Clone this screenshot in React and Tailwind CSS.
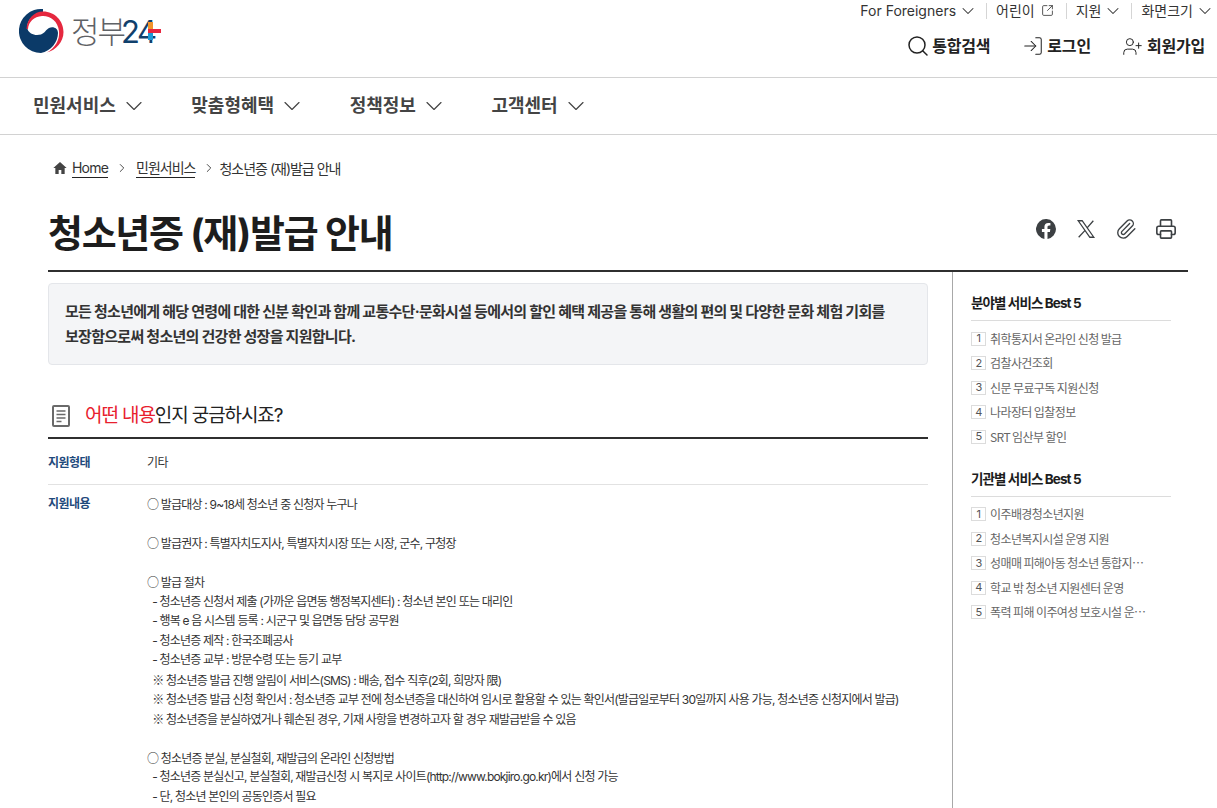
import { ChevronDown, ChevronRight, Search, LogIn, UserPlus, Paperclip, Printer, SquareArrowOutUpRight } from 'lucide-react';

const FONT = "font-['Inter','Noto_Sans_CJK_KR',sans-serif]";

const FIELD_BEST = ['취학통지서 온라인 신청 발급', '검찰사건조회', '신문 무료구독 지원신청', '나라장터 입찰정보', 'SRT 임산부 할인'];
const ORG_BEST = ['이주배경청소년지원', '청소년복지시설 운영 지원', '성매매 피해아동 청소년 통합지원센터 운영', '학교 밖 청소년 지원센터 운영', '폭력 피해 이주여성 보호시설 운영 지원'];

const CONTENT = [
  '○ 발급대상 : 9~18세 청소년 중 신청자 누구나',
  '',
  '○ 발급권자 : 특별자치도지사, 특별자치시장 또는 시장, 군수, 구청장',
  '',
  '○ 발급 절차',
  '  - 청소년증 신청서 제출 (가까운 읍면동 행정복지센터) : 청소년 본인 또는 대리인',
  '  - 행복 e 음 시스템 등록 : 시군구 및 읍면동 담당 공무원',
  '  - 청소년증 제작 : 한국조폐공사',
  '  - 청소년증 교부 : 방문수령 또는 등기 교부',
  '  ※ 청소년증 발급 진행 알림이 서비스(SMS) : 배송, 접수 직후(2회, 희망자 限)',
  '  ※ 청소년증 발급 신청 확인서 : 청소년증 교부 전에 청소년증을 대신하여 임시로 활용할 수 있는 확인서(발급일로부터 30일까지 사용 가능, 청소년증 신청지에서 발급)',
  '  ※ 청소년증을 분실하였거나 훼손된 경우, 기재 사항을 변경하고자 할 경우 재발급받을 수 있음',
  '',
  '○ 청소년증 분실, 분실철회, 재발급의 온라인 신청방법',
  '  - 청소년증 분실신고, 분실철회, 재발급신청 시 복지로 사이트(http://www.bokjiro.go.kr)에서 신청 가능',
  '  - 단, 청소년 본인의 공동인증서 필요',
];

const Logo = () => (
  <div className="flex items-center">
    <svg width="46" height="44" viewBox="0 0 46 44" className="shrink-0">
      <path d="M24 .1A22 22 0 1 0 22 44C32 42 39 33 39 24 39 19 34 17 30 19 27 20.500 26 24 22 25.500 16 27 10 25 8.500 20 7 12 14 5 24 3Z" fill="#0b3a68" />
      <path d="M7.500 20C8 10 15 2.500 24 2.500 36 2.500 44.500 12 44.500 23 44.500 33 37 41 28 43.500 36 39 41 31 40 22 39 12 31 6.500 23 7 15 7.500 9.500 13 9 20Z" fill="#e5283f" />
    </svg>
    <div className="relative ml-[6px] flex items-center leading-none">
      <span className="text-[31px] font-light tracking-[-2px] text-[#5f6266]">정부</span>
      <span className="ml-[-3px] text-[31px] font-normal tracking-[-2.500px] text-[#10406c]">24</span>
      <span className="absolute left-[77px] top-[6px] h-[7px] w-[5px] bg-[#f0932b]" />
      <span className="absolute left-[77px] top-[17px] h-[7px] w-[5px] bg-[#1d9bd7]" />
      <span className="absolute left-[77px] top-[13px] h-[4px] w-[13px] bg-[#e8263f]" />
    </div>
  </div>
);

const Divider = () => <span className="h-[16px] w-px bg-[#d5d5d5]" />;

const BestList = ({ title, items, className = '' }) => (
  <div className={className}>
    <h3 className="border-b border-[#dcdcdc] pb-[7px] text-[13.500px] font-bold leading-[20px] tracking-[-0.9px] text-[#1d1d1d]">{title}</h3>
    <ul className="mt-[5.500px]">
      {items.map((item, i) => (
        <li key={item} className="flex h-[24.500px] items-center gap-[4px] text-[12px] tracking-[-0.6px] text-[#666]">
          <span className="flex h-[14px] w-[15px] shrink-0 items-center justify-center border border-[#dcdcdc] text-[11px] leading-none text-[#555]">{i + 1}</span>
          <span className="max-w-[159px] truncate font-['Noto_Sans_CJK_KR',sans-serif]">{item}</span>
        </li>
      ))}
    </ul>
  </div>
);

// the round and reference marks come from the CJK font so they stay full width
const ContentLine = ({ line }) => {
  const match = line.match(/^(\s*)([○※])(.*)$/);
  if (!match) return <div className="h-[19.500px]">{line}</div>;
  return (
    <div className="h-[19.500px]">
      {match[1]}
      <span className="font-['Noto_Sans_CJK_KR',sans-serif]">{match[2]}</span>
      {match[3]}
    </div>
  );
};

export default function App() {
  return (
    <div className={`${FONT} h-[808px] overflow-hidden bg-white text-[#1d1d1d]`}>
      <header className="flex h-[78px] items-start justify-between border-b border-[#d2d2d2] pl-[19px] pr-[2px]">
        <div className="pt-[9px]"><Logo /></div>
        <div className="flex flex-col items-end">
          <div className="flex h-[21px] items-center gap-[8px] text-[14px] leading-none text-[#333]">
            <div className="flex items-center gap-[2px]">For Foreigners <ChevronDown size={20} strokeWidth={1.25} /></div>
            <Divider />
            <div className="ml-[1px] mr-[4px] flex items-center gap-[6px]">어린이 <SquareArrowOutUpRight size={13} strokeWidth={1.5} /></div>
            <Divider />
            <div className="ml-[1px] flex items-center gap-[2px]">지원 <ChevronDown size={20} strokeWidth={1.25} /></div>
            <Divider />
            <div className="ml-[1px] flex items-center gap-[2px]">화면크기 <ChevronDown size={20} strokeWidth={1.25} /></div>
          </div>
          <div className="mr-[10px] mt-[13px] flex items-center gap-[31px] text-[16px] font-bold tracking-[-0.2px] text-[#222]">
            <div className="mr-[1px] flex items-center gap-[2px]"><Search size={24} strokeWidth={1.5} />통합검색</div>
            <div className="flex items-center gap-[3px]"><LogIn size={22} strokeWidth={1.1} />로그인</div>
            <div className="flex items-center gap-[4px]"><UserPlus size={21} strokeWidth={1.1} />회원가입</div>
          </div>
        </div>
      </header>

      <nav className="flex h-[57px] items-center gap-[43.500px] border-b border-[#d2d2d2] pb-[1px] pl-[33px] text-[18px] font-bold text-[#444]">
        {['민원서비스', '맞춤형혜택', '정책정보', '고객센터'].map(label => (
          <div key={label} className="flex items-center gap-[4px]">
            {label}
            <ChevronDown size={28} strokeWidth={1} />
          </div>
        ))}
      </nav>

      <div className="pl-[48px] pr-[29px]">
        <div className="flex h-[66px] items-center pl-[4px] text-[14px] tracking-[-1px] text-[#333]">
          <svg width="16" height="16" viewBox="0 0 24 24" fill="#444" className="mr-[4px]"><path d="M12 3 2 12h3v9h5v-6h4v6h5v-9h3z" /></svg>
          <span className="border-b border-[#222] leading-[18px] tracking-[-0.8px]">Home</span>
          <ChevronRight size={14} strokeWidth={1.5} className="mx-[7px]" />
          <span className="border-b border-[#222] leading-[18px]">민원서비스</span>
          <ChevronRight size={14} strokeWidth={1.5} className="ml-[7px] mr-[3px]" />
          <span>청소년증 (재)발급 안내</span>
        </div>

        <div className="flex h-[71px] items-center justify-between border-b-2 border-[#2f2f2f] pb-[5px]">
          <h1 className="text-[38px] font-bold leading-none tracking-[-1.3px] text-[#1d1d1d]">청소년증 (재)발급 안내</h1>
          <div className="mb-[8px] mr-[11px] flex items-center gap-[18px] text-[#3c4043]">
            <svg width="20" height="20" viewBox="0 0 24 24" fill="currentColor" className="mr-[1px]"><path d="M24 12a12 12 0 1 0-13.900 11.900v-8.400H7.100V12h3V9.400c0-3 1.800-4.700 4.500-4.700 1.300 0 2.700.2 2.700.2v3h-1.500c-1.500 0-2 .9-2 1.900V12h3.400l-.5 3.500h-2.900v8.400A12 12 0 0 0 24 12z" /></svg>
            <svg width="22" height="22" viewBox="0 0 24 24" fill="none" stroke="currentColor" strokeWidth="1.400"><path d="M3.500 3h4.300L20.500 21h-4.300zM20 3 13 11M11 13.500 4 21" /></svg>
            <Paperclip size={22} strokeWidth={1.5} />
            <Printer size={22} strokeWidth={1.75} />
          </div>
        </div>

        <div className="flex">
          <main className="w-[880px] shrink-0 pt-[11px]">
            <div className="break-keep rounded border border-[#e4e6ea] bg-[#f4f5f7] px-[16px] py-[15px] text-[15px] font-bold leading-[25px] tracking-[-0.72px] text-[#333]">
              모든 청소년에게 해당 연령에 대한 신분 확인과 함께 교통수단·문화시설 등에서의 할인 혜택 제공을 통해 생활의 편의 및 다양한 문화 체험 기회를 보장함으로써 청소년의 건강한 성장을 지원합니다.
            </div>

            <div className="mt-[33px] flex h-[41px] items-center border-b-2 border-[#2f2f2f] pb-[4px] pl-[4px]">
              <svg width="18" height="22" viewBox="0 0 18 22" fill="none" stroke="#6a6a6a" strokeWidth="2">
                <rect x="1" y="1" width="16" height="20" rx="1" />
                <path d="M4.500 6h9M4.500 9.500h9M4.500 13h9M4.500 16.500h5" strokeWidth="1.500" />
              </svg>
              <h2 className="ml-[15px] text-[19px] leading-none tracking-[-1.1px] text-[#222]"><span className="text-[#e8202e]">어떤 내용</span>인지 궁금하시죠?</h2>
            </div>

            <div className="flex h-[46px] items-center border-b border-[#e2e2e2] pt-[3px] text-[12px] tracking-[-0.5px]">
              <div className="w-[99px] font-bold text-[#1f4a7c]">지원형태</div>
              <div className="text-[#333]">기타</div>
            </div>
            <div className="flex pt-[9px] text-[12px] tracking-[-0.8px]">
              <div className="w-[99px] font-bold leading-[19.500px] tracking-[-0.5px] text-[#1f4a7c]">지원내용</div>
              <div className="whitespace-pre leading-[19.500px] text-[#333]">
                {CONTENT.map((line, i) => <ContentLine key={i} line={line} />)}
              </div>
            </div>
          </main>

          <aside className="ml-[24px] h-[540px] min-w-0 flex-1 border-l border-[#a8a8a8] pl-[18px] pr-[17px] pt-[21px]">
            <BestList title="분야별 서비스 Best 5" items={FIELD_BEST} />
            <BestList title="기관별 서비스 Best 5" items={ORG_BEST} className="mt-[19.500px]" />
          </aside>
        </div>
      </div>
    </div>
  );
}
